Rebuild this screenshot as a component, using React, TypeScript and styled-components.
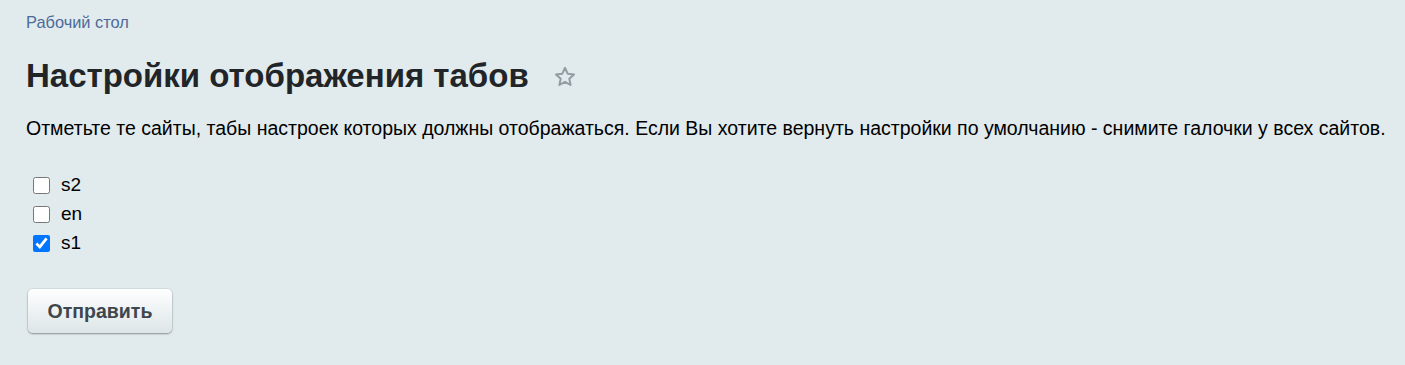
import React, { useState } from "react";
import styled, { createGlobalStyle } from "styled-components";

const GlobalStyle = createGlobalStyle`
  html, body {
    margin: 0;
    padding: 0;
    background: #e1eaec;
    font-family: "Liberation Sans", Arial, sans-serif;
    color: #000;
  }
`;

const Page = styled.div`
  height: 365px;
  box-sizing: border-box;
  padding: 13px 26px 0;
  background: #e1eaec;
`;

const Breadcrumb = styled.a`
  display: inline-block;
  font-size: 16.4px;
  color: #4d6a9a;
  text-decoration: none;
`;

const TitleRow = styled.div`
  display: flex;
  align-items: center;
  gap: 24px;
  margin-top: 24px;
`;

const Title = styled.h1`
  margin: 0;
  font-size: 33px;
  line-height: 40px;
  font-weight: bold;
  color: #222527;
`;

const Star = styled.svg`
  width: 24px;
  height: 24px;
  margin-top: 2px;
`;

const Description = styled.p`
  margin: 20px 0 0;
  font-size: 19.5px;
  line-height: 24px;
  white-space: nowrap;
  color: #000;
`;

const SiteList = styled.div`
  display: flex;
  flex-direction: column;
  gap: 7px;
  margin-top: 34px;
  padding-left: 7px;
`;

const SiteRow = styled.label`
  display: flex;
  align-items: center;
  gap: 11px;
  font-size: 19px;
  line-height: 22px;
`;

const Check = styled.input`
  width: 17px;
  height: 17px;
  margin: 0;
  accent-color: #0075ff;
`;

const SubmitButton = styled.button`
  display: block;
  margin-top: 35px;
  margin-left: 2px;
  width: 144px;
  height: 44px;
  border: none;
  border-radius: 5px;
  background: linear-gradient(#ffffff, #dde5e8);
  box-shadow: 0 1px 2px rgba(0, 0, 0, 0.35), 0 0 0 1px rgba(0, 0, 0, 0.05);
  font-family: "Liberation Sans", Arial, sans-serif;
  font-size: 19.5px;
  font-weight: bold;
  color: #3e474d;
  cursor: pointer;
`;

const sites = [
  { id: "s2", checked: false },
  { id: "en", checked: false },
  { id: "s1", checked: true },
];

export default function App() {
  const [state, setState] = useState(sites);

  return (
    <Page>
      <GlobalStyle />
      <Breadcrumb href="#">Рабочий стол</Breadcrumb>
      <TitleRow>
        <Title>Настройки отображения табов</Title>
        <Star viewBox="0 0 24 24" fill="none" stroke="#929ca3" strokeWidth="2" strokeLinejoin="round">
          <path d="M12 2.8l2.7 5.9 6.3.7-4.7 4.3 1.3 6.3L12 16.8l-5.6 3.2 1.3-6.3L3 9.4l6.3-.7z" />
        </Star>
      </TitleRow>
      <Description>
        Отметьте те сайты, табы настроек которых должны отображаться. Если Вы хотите вернуть настройки по умолчанию - снимите галочки у всех сайтов.
      </Description>
      <SiteList>
        {state.map((s, i) => (
          <SiteRow key={s.id}>
            <Check
              type="checkbox"
              checked={s.checked}
              onChange={() =>
                setState(state.map((x, j) => (j === i ? { ...x, checked: !x.checked } : x)))
              }
            />
            {s.id}
          </SiteRow>
        ))}
      </SiteList>
      <SubmitButton>Отправить</SubmitButton>
    </Page>
  );
}
